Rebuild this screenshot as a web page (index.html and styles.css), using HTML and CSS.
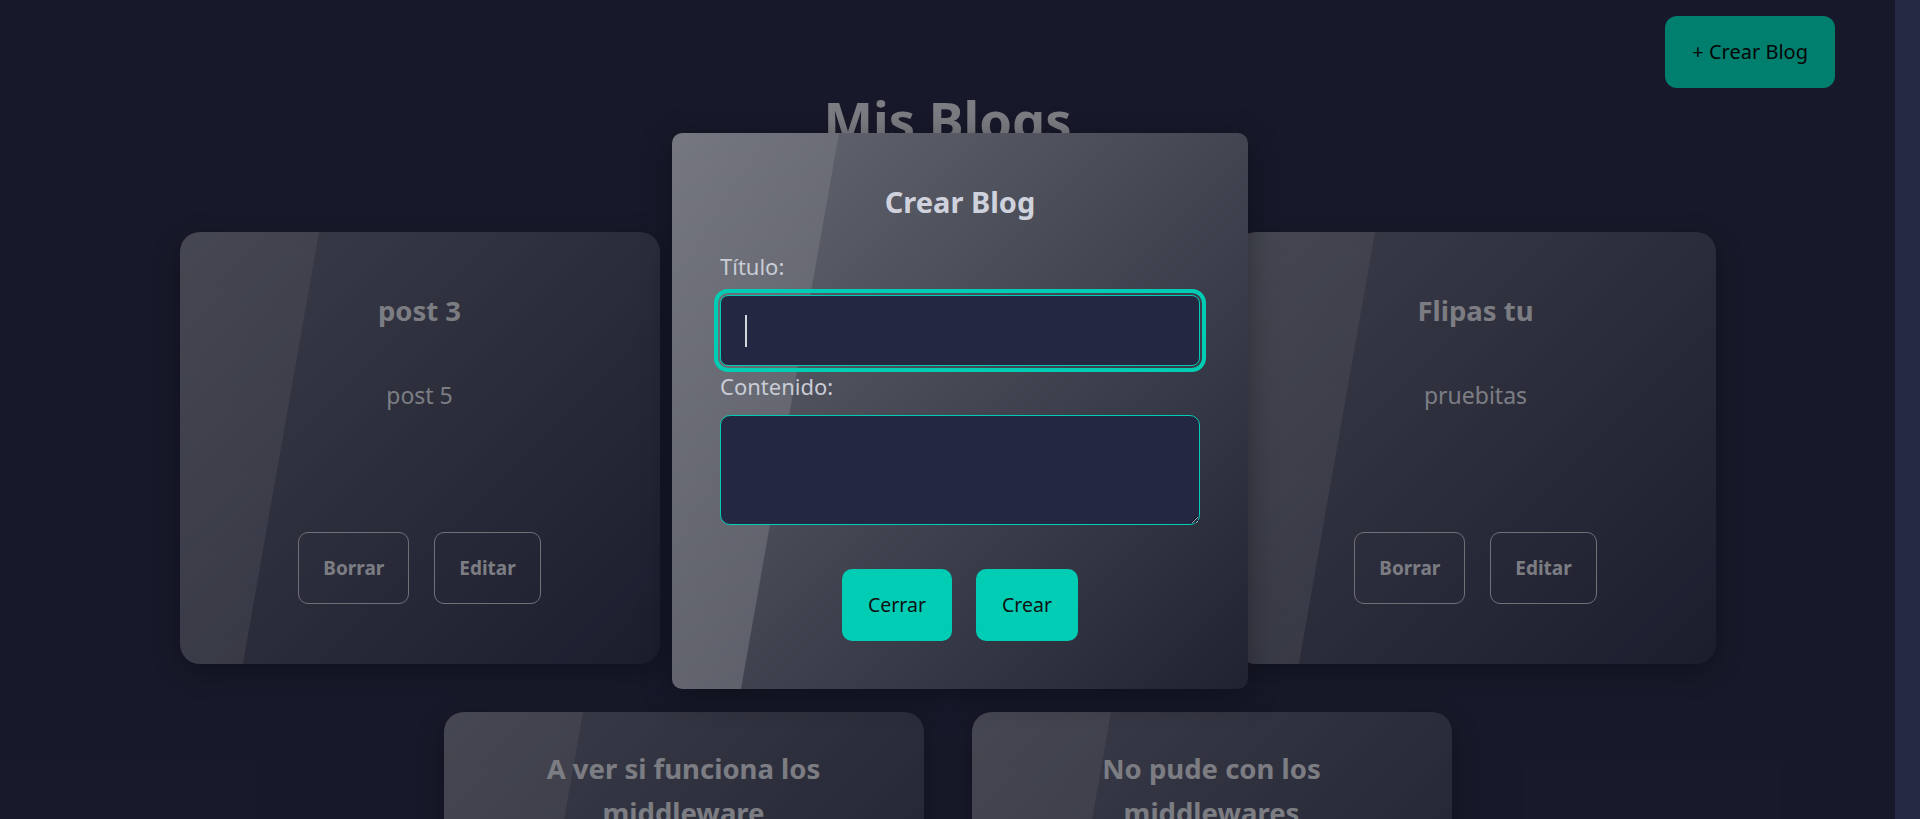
FILE: index.html
```html
<!DOCTYPE html>
<html lang="es">
<head>
<meta charset="utf-8">
<title>Mis Blogs</title>
<link rel="stylesheet" href="styles.css">
</head>
<body>
  <div class="app">
    <header class="topbar">
      <button class="btn-new">+ Crear Blog</button>
    </header>
    <h1 class="page-title">Mis Blogs</h1>
    <section class="grid">
      <article class="card">
        <h3 class="card-title">post 3</h3>
        <p class="card-text">post 5</p>
        <div class="card-actions">
          <button class="btn-outline">Borrar</button>
          <button class="btn-outline">Editar</button>
        </div>
      </article>
      <article class="card">
        <h3 class="card-title">Mi primer blog con React</h3>
        <p class="card-text">contenido</p>
        <div class="card-actions">
          <button class="btn-outline">Borrar</button>
          <button class="btn-outline">Editar</button>
        </div>
      </article>
      <article class="card">
        <h3 class="card-title">Flipas tu</h3>
        <p class="card-text">pruebitas</p>
        <div class="card-actions">
          <button class="btn-outline">Borrar</button>
          <button class="btn-outline">Editar</button>
        </div>
      </article>
      <article class="card">
        <h3 class="card-title">A ver si funciona los middleware</h3>
        <p class="card-text">probando</p>
        <div class="card-actions">
          <button class="btn-outline">Borrar</button>
          <button class="btn-outline">Editar</button>
        </div>
      </article>
      <article class="card">
        <h3 class="card-title">No pude con los middlewares</h3>
        <p class="card-text">otra vez</p>
        <div class="card-actions">
          <button class="btn-outline">Borrar</button>
          <button class="btn-outline">Editar</button>
        </div>
      </article>
    </section>
    <div class="backdrop"></div>
  </div>

  <div class="modal">
    <h2 class="modal-title">Crear Blog</h2>
    <label class="field-label" for="titulo">Título:</label>
    <div class="field">
      <input id="titulo" class="input is-focused" type="text">
      <span class="caret"></span>
    </div>
    <label class="field-label" for="contenido">Contenido:</label>
    <textarea id="contenido" class="textarea"></textarea>
    <div class="modal-actions">
      <button class="btn-solid">Cerrar</button>
      <button class="btn-solid">Crear</button>
    </div>
  </div>
</body>
</html>
```

FILE: styles.css
```css
* {
  box-sizing: border-box;
}

html,
body {
  margin: 0;
}

body {
  position: relative;
  height: 819px;
  overflow: hidden;
  background: #262944;
  font-family: "Noto Sans", "Open Sans", sans-serif;
}

.app {
  position: relative;
  width: calc(100% - 25px);
  height: 100%;
  overflow: hidden;
}

.topbar {
  display: flex;
  justify-content: flex-end;
  padding: 16px 60px 0 0;
}

.btn-new {
  background: #00cdb4;
  color: #0b0b0b;
  border: 0;
  border-radius: 12px;
  padding: 24px 27px;
  font-family: inherit;
  font-size: 20px;
  line-height: 24px;
}

.page-title {
  margin: 0;
  text-align: center;
  font-size: 52.5px;
  line-height: 63px;
  font-weight: 700;
  color: #c8cad3;
}

.grid {
  display: flex;
  flex-wrap: wrap;
  justify-content: center;
  gap: 48px;
  margin-top: 81px;
}

.card {
  position: relative;
  isolation: isolate;
  overflow: hidden;
  width: 480px;
  min-height: 432px;
  padding: 35px 48px;
  display: flex;
  flex-direction: column;
  justify-content: center;
  text-align: center;
  border-radius: 20px;
  background: linear-gradient(135deg, rgba(255, 255, 255, 0.27), rgba(255, 255, 255, 0.03));
  box-shadow: 0 8px 28px rgba(0, 0, 0, 0.3);
  color: #c8cad3;
}

.card::before,
.modal::before {
  content: "";
  position: absolute;
  z-index: -1;
  top: 0;
  bottom: 0;
  left: -40%;
  width: 69%;
  transform: skewX(-10deg);
  transform-origin: top left;
  background: linear-gradient(to bottom, rgba(255, 255, 255, 0.1), rgba(255, 255, 255, 0.12));
}

.card-title {
  margin: 0 0 44.4px;
  font-size: 27.5px;
  line-height: 44px;
  font-weight: 700;
}

.card-text {
  margin: 0 0 119px;
  font-size: 23px;
  line-height: 36px;
}

.card-actions {
  display: flex;
  justify-content: center;
  gap: 25px;
  margin-bottom: 3px;
}

.btn-outline {
  background: transparent;
  border: 1px solid #b5b7c0;
  border-radius: 10px;
  padding: 24px;
  font-family: inherit;
  font-size: 19px;
  line-height: 22px;
  font-weight: 700;
  color: #c8cad3;
}

.backdrop {
  position: absolute;
  inset: 0;
  background: rgba(0, 0, 0, 0.38);
}

.modal {
  position: absolute;
  top: 133px;
  left: 50%;
  transform: translateX(-50%);
  isolation: isolate;
  overflow: hidden;
  width: 576px;
  padding: 49px 48px 48px;
  border-radius: 10px;
  background:
    linear-gradient(135deg, rgba(255, 255, 255, 0.35), rgba(255, 255, 255, 0.035)),
    #171a29;
  box-shadow: 0 6px 30px rgba(0, 0, 0, 0.35);
}

.modal::before {
  background: linear-gradient(to bottom, rgba(255, 255, 255, 0.09), rgba(255, 255, 255, 0.16));
}

.modal-title {
  margin: 0 0 29px;
  text-align: center;
  font-size: 29px;
  line-height: 40px;
  font-weight: 700;
  color: #cfd2dc;
}

.field-label {
  display: block;
  margin-bottom: 14px;
  font-size: 22px;
  line-height: 30px;
  color: #c9ccd6;
}

.field {
  position: relative;
  margin-bottom: 5px;
}

.input {
  display: block;
  width: 100%;
  height: 71px;
  padding: 0 25px;
  border: 1px solid #00cdb4;
  border-radius: 8px;
  background: #232742;
  color: #cfd2dc;
  font-family: inherit;
  font-size: 22px;
}

.input.is-focused {
  outline: 4px solid #00cdb4;
  outline-offset: 2px;
}

.caret {
  position: absolute;
  left: 25px;
  top: 20px;
  width: 2px;
  height: 32px;
  background: #d3d5de;
}

.textarea {
  display: block;
  width: 100%;
  height: 110px;
  padding: 12px 25px;
  border: 1px solid #00cdb4;
  border-radius: 10px;
  background: #232742;
  color: #cfd2dc;
  font-family: inherit;
  font-size: 22px;
  resize: vertical;
  outline: none;
}

.modal-actions {
  display: flex;
  justify-content: center;
  gap: 24px;
  margin-top: 44px;
}

.btn-solid {
  background: #00cdb4;
  color: #111111;
  border: 0;
  border-radius: 10px;
  padding: 24px 26px;
  font-family: inherit;
  font-size: 19.5px;
  line-height: 24px;
}
```
